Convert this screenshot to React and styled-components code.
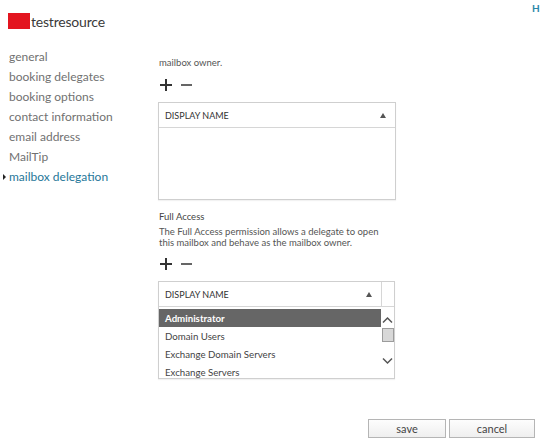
import React from 'react';
import styled, { createGlobalStyle } from 'styled-components';

const GlobalStyle = createGlobalStyle`
	html, body {
		margin: 0;
		padding: 0;
		background: #fff;
		overflow: hidden;
	}
	body {
		font-family: Lato, 'Liberation Sans', sans-serif;
		color: #444;
	}
`;

const navItems = [
	'general',
	'booking delegates',
	'booking options',
	'contact information',
	'email address',
	'MailTip',
	'mailbox delegation',
];

const members = ['Administrator', 'Domain Users', 'Exchange Domain Servers', 'Exchange Servers'];

const PlusMinus = () => (
	<IconRow>
		<svg width="14" height="14" viewBox="0 0 14 14">
			<path d="M7 1v12M1 7h12" stroke="#333" strokeWidth="2" />
		</svg>
		<svg width="13" height="14" viewBox="0 0 13 14">
			<path d="M1 7h11" stroke="#666" strokeWidth="2" />
		</svg>
	</IconRow>
);

const SortArrow = () => (
	<svg width="6" height="5" viewBox="0 0 6 5">
		<path d="M0 5L3 0L6 5Z" fill="#555" />
	</svg>
);

const App = () => {
	return (
		<>
			<GlobalStyle />
			<Page>
				<Header>
					<Title>
						<Swatch />
						testresource
					</Title>
					<Help>H</Help>
				</Header>
				<Main>
					<Nav>
						{navItems.map((item, i) => (
							<NavItem key={item} $active={i === navItems.length - 1}>
								{item}
							</NavItem>
						))}
					</Nav>
					<Content>
						<Caption>mailbox owner.</Caption>
						<PlusMinus />
						<Grid>
							<GridHeader>
								<HeadCell>
									DISPLAY NAME
									<SortArrow />
								</HeadCell>
							</GridHeader>
						</Grid>
						<Section>Full Access</Section>
						<Description>
							The Full Access permission allows a delegate to open this mailbox and behave as the
							mailbox owner.
						</Description>
						<PlusMinus />
						<Grid $narrow>
							<GridHeader>
								<HeadCell>
									DISPLAY NAME
									<SortArrow />
								</HeadCell>
								<HeadSpacer />
							</GridHeader>
							<ListBody>
								<Rows>
									{members.map((m, i) => (
										<Row key={m} $selected={i === 0}>
											{m}
										</Row>
									))}
								</Rows>
								<Scrollbar>
									<svg width="11" height="8" viewBox="0 0 11 8">
										<path d="M1 6.5L5.5 2L10 6.5" stroke="#555" strokeWidth="1.5" fill="none" />
									</svg>
									<Thumb />
									<svg width="11" height="8" viewBox="0 0 11 8">
										<path d="M1 1.5L5.5 6L10 1.5" stroke="#555" strokeWidth="1.5" fill="none" />
									</svg>
								</Scrollbar>
							</ListBody>
						</Grid>
					</Content>
				</Main>
				<Footer>
					<Button $w={78}>save</Button>
					<Button $w={86}>cancel</Button>
				</Footer>
			</Page>
		</>
	);
};

export default App;

const Page = styled.div`
	width: 540px;
	height: 442px;
	overflow: hidden;
`;
const Header = styled.div`
	display: flex;
	justify-content: space-between;
	align-items: flex-start;
`;
const Title = styled.div`
	display: flex;
	align-items: center;
	margin: 12px 0 0 8px;
	height: 18px;
	font-size: 14px;
	letter-spacing: -0.2px;
	color: #3a3a3a;
`;
const Swatch = styled.span`
	display: inline-block;
	width: 22px;
	height: 16px;
	margin-right: 1px;
	background: #e3151f;
`;
const Help = styled.div`
	width: 8px;
	margin-top: 1px;
	font-size: 10px;
	font-weight: 700;
	color: #2a86a8;
	line-height: 14px;
`;
const Main = styled.div`
	display: flex;
	margin-top: 17px;
`;
const Nav = styled.ul`
	list-style: none;
	margin: 0;
	padding: 0 0 0 9px;
	width: 149px;
`;
const NavItem = styled.li`
	position: relative;
	height: 20px;
	line-height: 20px;
	font-size: 12px;
	color: ${(p) => (p.$active ? '#1f7799' : '#717171')};
	white-space: nowrap;
	&::before {
		content: '';
		display: ${(p) => (p.$active ? 'block' : 'none')};
		position: absolute;
		left: -6px;
		top: 7px;
		border-left: 3px solid #222;
		border-top: 3px solid transparent;
		border-bottom: 3px solid transparent;
	}
`;
const Content = styled.div`
	display: flex;
	flex-direction: column;
	width: 238px;
	padding-top: 9px;
`;
const Caption = styled.div`
	padding-left: 1px;
	font-size: 9.5px;
	line-height: 14px;
	color: #555;
`;
const IconRow = styled.div`
	display: flex;
	gap: 7px;
	align-items: center;
	height: 16px;
	padding-left: 1px;
	margin: 7px 0 9px;
`;
const Grid = styled.div`
	display: flex;
	flex-direction: column;
	width: ${(p) => (p.$narrow ? '237px' : '238px')};
	height: 98px;
	box-sizing: border-box;
	border: 1px solid #cfcfcf;
	box-shadow: 0 1px 1px rgba(0, 0, 0, 0.05);
`;
const GridHeader = styled.div`
	display: flex;
	height: 24px;
	flex-shrink: 0;
	border-bottom: 1px solid #d6d6d6;
`;
const HeadCell = styled.div`
	flex: 1;
	display: flex;
	align-items: center;
	justify-content: space-between;
	padding: 0 9px 0 6px;
	font-size: 9px;
	color: #333;
`;
const HeadSpacer = styled.div`
	width: 12px;
	border-left: 1px solid #d6d6d6;
`;
const Section = styled.div`
	margin-top: 10px;
	padding-left: 1px;
	font-size: 9.5px;
	line-height: 13px;
	color: #444;
`;
const Description = styled.div`
	margin-top: 3px;
	padding-left: 1px;
	font-size: 9.5px;
	line-height: 11px;
	color: #555;
	& + ${IconRow} {
		margin-top: 8px;
	}
`;
const ListBody = styled.div`
	display: flex;
	flex: 1;
	overflow: hidden;
	padding-top: 2px;
`;
const Rows = styled.div`
	flex: 1;
	overflow: hidden;
`;
const Row = styled.div`
	height: 18px;
	line-height: 18px;
	padding-left: 6px;
	font-size: 9.7px;
	white-space: nowrap;
	font-weight: ${(p) => (p.$selected ? 700 : 400)};
	color: ${(p) => (p.$selected ? '#fff' : '#444')};
	background: ${(p) => (p.$selected ? '#666' : 'transparent')};
`;
const Scrollbar = styled.div`
	width: 13px;
	display: flex;
	flex-direction: column;
	align-items: center;
	padding-top: 7px;
	gap: 4px;
	svg:last-child {
		margin-top: 11px;
	}
`;
const Thumb = styled.div`
	width: 12px;
	height: 14px;
	box-sizing: border-box;
	border: 1px solid #9c9c9c;
	background: #d8d8d8;
`;
const Footer = styled.div`
	display: flex;
	justify-content: flex-end;
	gap: 3px;
	padding-right: 5px;
	margin-top: 40px;
`;
const Button = styled.button`
	width: ${(p) => p.$w}px;
	height: 19px;
	padding: 0;
	border: 1px solid #b5b5b5;
	background: linear-gradient(#fdfdfd, #efefef);
	font-family: Lato, 'Liberation Sans', sans-serif;
	font-size: 11px;
	color: #444;
`;
